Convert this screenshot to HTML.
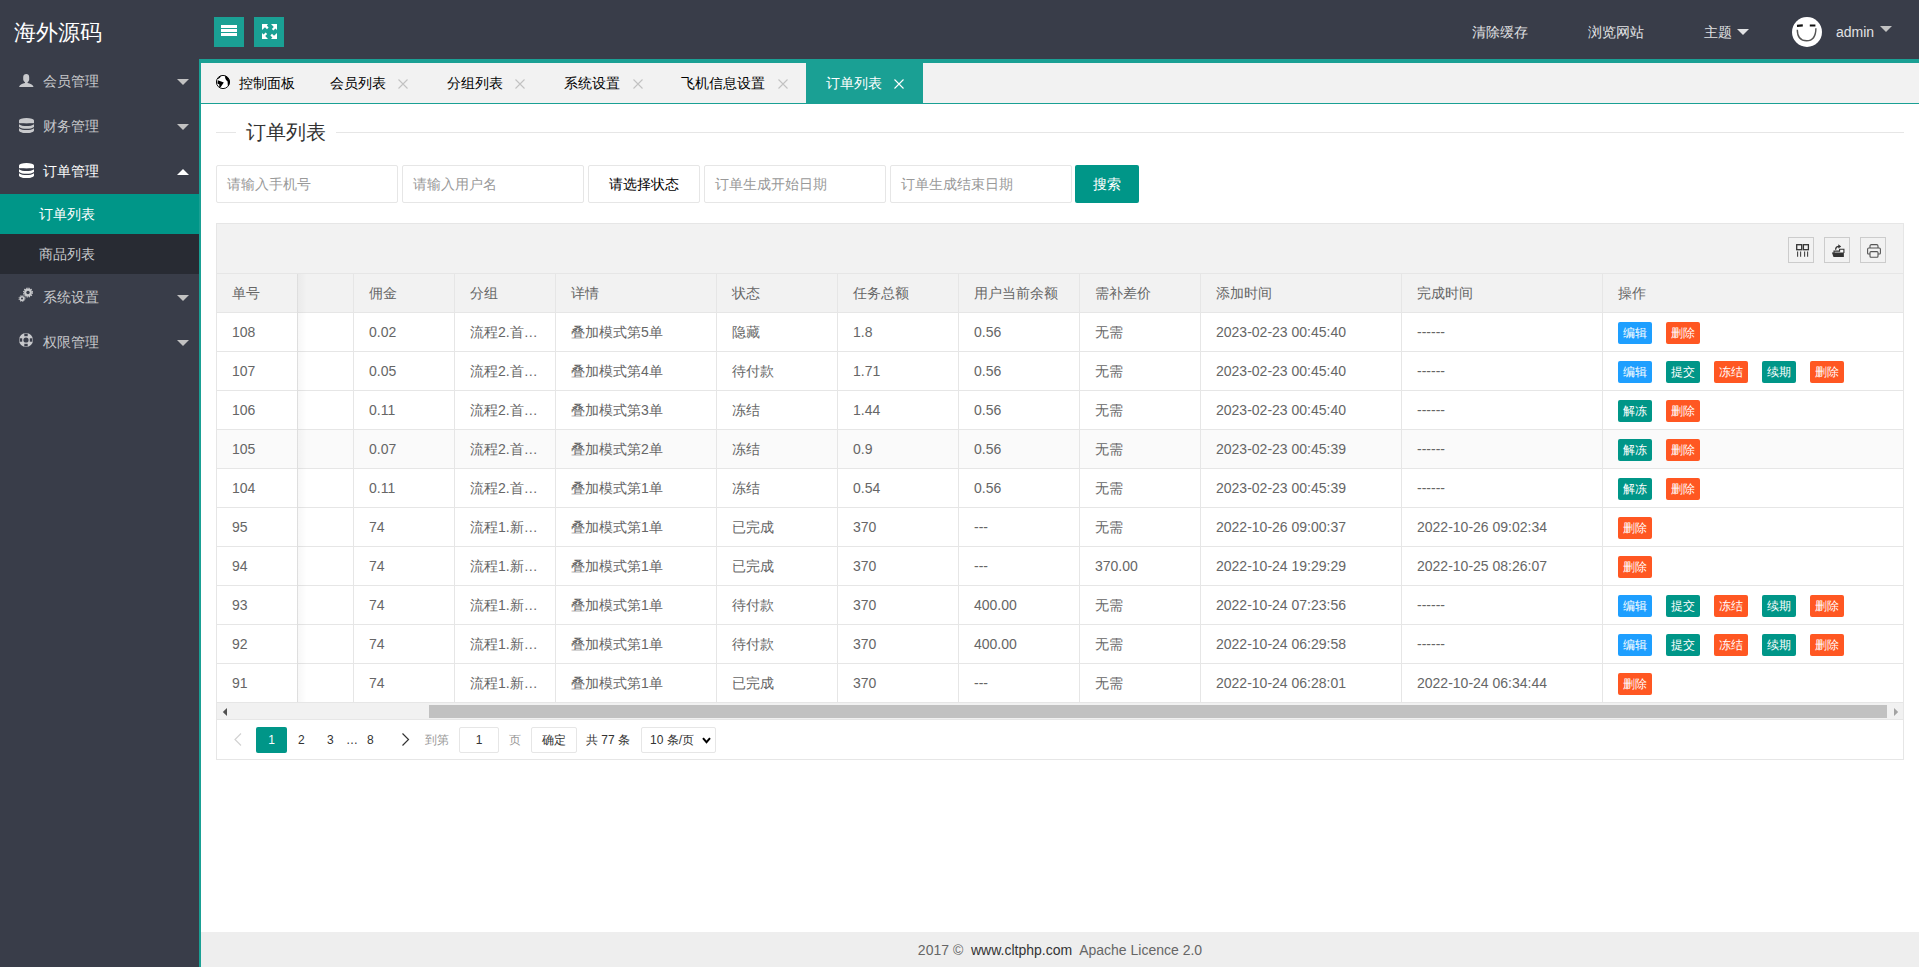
<!DOCTYPE html>
<html><head><meta charset="utf-8">
<style>
*{margin:0;padding:0;box-sizing:border-box}
html,body{width:1919px;height:967px;overflow:hidden;background:#fff;font-family:"Liberation Sans",sans-serif;font-size:14px;color:#666}
.abs{position:absolute}
#hdr{position:absolute;left:0;top:0;width:1919px;height:59px;background:#393D49}
#side{position:absolute;left:0;top:59px;width:199px;height:908px;background:#393D49}
#logo{position:absolute;left:14px;top:18px;font-size:22px;line-height:30px;color:#fff;font-weight:500}
.tbtn{position:absolute;top:17px;width:30px;height:30px;background:#1AA094}
.hnav{position:absolute;top:22px;line-height:20px;font-size:14px;color:#e1e2e4}
.tri{position:absolute;width:0;height:0;border-left:6px solid transparent;border-right:6px solid transparent;border-top:6px solid #c2c2c2}
.mi{position:absolute;left:0;width:199px;height:45px;color:#c8c9cc}
.mi .t{position:absolute;left:43px;top:13px;line-height:20px}
.mi svg{position:absolute}
.mi .tri{left:177px;top:21px;border-top-color:#c2c2c2}
.sub{position:absolute;left:0;width:199px;height:40px;line-height:40px}
.sub span{position:absolute;left:39px;top:0}
#lborder{position:absolute;left:199px;top:59px;width:2px;height:908px;background:#1AA094}
#tabs{position:absolute;left:201px;top:59px;width:1718px;height:45px;background:#f2f2f2;border-top:4px solid #1AA094;border-bottom:1px solid #1AA094}
.tab{position:absolute;top:0;height:40px;line-height:40px;color:#000;font-size:14px}
.tab .x{position:absolute;top:0;color:#c2c2c2;font-size:14px}
#legend{position:absolute;left:216px;top:132px;width:1688px;height:1px;background:#e6e6e6}
#legtext{position:absolute;left:236px;top:119px;padding:0 10px;background:#fff;font-size:20px;line-height:26px;color:#333}
.inp{position:absolute;top:165px;height:38px;border:1px solid #e6e6e6;border-radius:2px;background:#fff;line-height:36px;padding-left:10px;color:#999;font-size:14px}
#tbl{position:absolute;left:216px;top:223px;width:1688px;height:537px;background:#fff}
#tbl .outl{position:absolute;left:0;top:0;width:1688px;height:537px;border:1px solid #e6e6e6;pointer-events:none}
.toolbar{position:absolute;left:0;top:0;width:1688px;height:51px;background:#f2f2f2;border-bottom:1px solid #e6e6e6}
.ticon{position:absolute;top:14px;width:26px;height:26px;border:1px solid #ccc;background:#f2f2f2}
.thead{position:absolute;left:0;width:1688px;height:39px;background:#f2f2f2}
.rowbg{position:absolute;left:0;width:1688px;height:39px;background:#fff}
.rowbg.hov{background:#fafafa}
.c{position:absolute;border-left:1px solid #e6e6e6;border-bottom:1px solid #e6e6e6;line-height:38px;padding-left:15px;white-space:nowrap;color:#666}
.btn{position:absolute;display:inline-block;font-style:normal;height:22px;line-height:22px;padding:0 5px;font-size:12px;color:#fff;border-radius:2px}
.ops{position:absolute;left:15px;top:9px;height:22px;width:280px}
.ops .btn{top:0}
.btn.b{background:#1E9FFF}.btn.o{background:#FF5722}.btn.g{background:#009688}
#pager{position:absolute;left:0;top:497px;width:1688px;height:40px;font-size:12px}
.pg{position:absolute;top:7px;line-height:26px;color:#333}
#footer{position:absolute;left:201px;top:932px;width:1718px;height:35px;background:#eee;text-align:center;line-height:37px;color:#666;font-size:14px}
</style></head><body>
<div id="hdr"></div>
<div id="side"></div>
<div id="logo">海外源码</div>
<div class="tbtn" style="left:214px"><svg class="abs" style="left:7px;top:8px" width="16" height="12"><rect x="0" y="0" width="16" height="3" fill="#fff"/><rect x="0" y="4" width="16" height="3" fill="#fff"/><rect x="0" y="8" width="16" height="3" fill="#fff"/></svg></div>
<div class="tbtn" style="left:254px"><svg class="abs" style="left:8px;top:7px" width="15" height="15" viewBox="0 0 15 15"><path fill="#fff" d="M0 0H6L4.8 1.6 6.6 3.6 5 5.2 3 3.2 0 6Z M15 0V6L13.4 4.6 11.4 6.6 9.8 5 11.8 3 9 0Z M0 15V9L1.6 10.4 3.6 8.4 5.2 10 3.2 12 6 15Z M15 15H9L10.4 13.4 8.4 11.4 10 9.8 12 11.8 15 9Z"/></svg></div>
<div class="hnav" style="left:1472px">清除缓存</div>
<div class="hnav" style="left:1588px">浏览网站</div>
<div class="hnav" style="left:1704px">主题</div>
<div class="tri" style="left:1737px;top:29px;border-top-color:#e1e2e4"></div>
<svg class="abs" style="left:1792px;top:17px" width="30" height="30" viewBox="0 0 30 30"><circle cx="15" cy="15" r="15" fill="#fff"/><path d="M5 8.8L10.8 8.4 M17.8 8.5H23.4" stroke="#111" stroke-width="2.2"/><path d="M5.3 12.8C5.3 20 9 23.8 14.6 23.8C20.4 23.8 23.9 19.5 23.9 11.3" stroke="#555" stroke-width="1.4" fill="none"/></svg>
<div class="hnav" style="left:1836px;top:22px">admin</div>
<div class="tri" style="left:1880px;top:26px;border-top-color:#c2c2c2"></div>

<div class="mi" style="top:58px"><svg style="left:19px;top:16px" width="15" height="14" viewBox="0 0 15 14"><path fill="#c8c9cc" d="M4.2 3.2C4.2 1.2 5.5 0 7.3 0S10.2 1.2 10.2 3.2V5.4C10.2 6.6 9.4 7.6 8.6 8.2V9C11.2 9.4 13.6 10.4 14.6 13H0C1 10.4 3.4 9.4 6 9V8.2C5.2 7.6 4.2 6.6 4.2 5.4Z"/></svg><span class="t">会员管理</span><i class="tri"></i></div>
<div class="mi" style="top:103px"><svg style="left:19px;top:15px" width="15" height="15" viewBox="0 0 15 15"><g fill="#c8c9cc"><ellipse cx="7.5" cy="2.6" rx="7.5" ry="2.6"/><rect x="0" y="2.6" width="15" height="2.6"/><path d="M0 6.2C1.5 7.6 4.5 8 7.5 8S13.5 7.6 15 6.2V9C13.5 10.4 10.5 10.8 7.5 10.8S1.5 10.4 0 9Z"/><path d="M0 10.2C1.5 11.6 4.5 12 7.5 12S13.5 11.6 15 10.2V12.4C15 13.8 11.6 15 7.5 15S0 13.8 0 12.4Z"/></g></svg><span class="t">财务管理</span><i class="tri"></i></div>
<div class="mi" style="top:148px;color:#fff"><svg style="left:19px;top:15px" width="15" height="15" viewBox="0 0 15 15"><g fill="#fff"><ellipse cx="7.5" cy="2.6" rx="7.5" ry="2.6"/><rect x="0" y="2.6" width="15" height="2.6"/><path d="M0 6.2C1.5 7.6 4.5 8 7.5 8S13.5 7.6 15 6.2V9C13.5 10.4 10.5 10.8 7.5 10.8S1.5 10.4 0 9Z"/><path d="M0 10.2C1.5 11.6 4.5 12 7.5 12S13.5 11.6 15 10.2V12.4C15 13.8 11.6 15 7.5 15S0 13.8 0 12.4Z"/></g></svg><span class="t">订单管理</span><i class="tri" style="border-top:0;border-bottom:6px solid #fff"></i></div>
<div class="sub" style="top:194px;background:#009688;color:#fff"><span>订单列表</span></div>
<div class="sub" style="top:234px;background:#282B33;color:#c8c9cc"><span>商品列表</span></div>
<div class="mi" style="top:274px"><svg style="left:17px;top:12px" width="17" height="17" viewBox="0 0 17 17"><g fill="#c8c9cc"><circle cx="11" cy="6.5" r="3.9"/><circle cx="5" cy="12.5" r="2.6"/></g><g fill="none" stroke="#c8c9cc"><circle cx="11" cy="6.5" r="4.4" stroke-width="1.2" stroke-dasharray="1.3 1"/><circle cx="5" cy="12.5" r="3" stroke-width="1" stroke-dasharray="1 0.9"/></g><g fill="#393D49"><circle cx="11" cy="6.5" r="1.7"/><circle cx="5" cy="12.5" r="1"/></g></svg><span class="t">系统设置</span><i class="tri"></i></div>
<div class="mi" style="top:319px"><svg style="left:19px;top:14px" width="14" height="14" viewBox="0 0 14 14"><circle cx="7" cy="7" r="7" fill="#c8c9cc"/><circle cx="7" cy="7" r="2.6" fill="#393D49"/><g fill="#393D49"><rect x="5.3" y="0.6" width="3.4" height="2.6"/><rect x="5.3" y="10.8" width="3.4" height="2.6"/><rect x="0.6" y="5.3" width="2.6" height="3.4"/><rect x="10.8" y="5.3" width="2.6" height="3.4"/></g></svg><span class="t">权限管理</span><i class="tri"></i></div>

<div id="lborder"></div>
<div id="tabs">
  <svg class="abs" style="left:15px;top:12px" width="15" height="15" viewBox="0 0 15 15"><circle cx="7" cy="7" r="6.6" fill="#fff" stroke="#000" stroke-width="0.95"/><path fill="#000" d="M1.4 4.2C3 3.8 4.4 2.8 5.2 0.8A6.6 6.6 0 0 0 1.4 4.2Z M1.8 5.2L7.8 7.4L4.4 12.6L3.2 12L3.4 9.4L1.4 8.6Z M9 0.8C9 3.4 9.6 5 11.6 6.4L11.8 10.6L12.2 11A6.6 6.6 0 0 0 9 0.8Z"/></svg><div class="tab" style="left:38px">控制面板</div>
  <div class="tab" style="left:129px">会员列表</div>
  <div class="tab" style="left:246px">分组列表</div>
  <div class="tab" style="left:363px">系统设置</div>
  <div class="tab" style="left:480px">飞机信息设置</div>
  <div class="tab" style="left:605px;width:117px;background:#1AA094;color:#fff;padding-left:20px">订单列表</div>
<svg class="abs" style="left:197px;top:16px" width="10" height="10" viewBox="0 0 10 10"><path d="M0.5 0.5L9.5 9.5M9.5 0.5L0.5 9.5" stroke="#c2c2c2" stroke-width="1.1"/></svg><svg class="abs" style="left:314px;top:16px" width="10" height="10" viewBox="0 0 10 10"><path d="M0.5 0.5L9.5 9.5M9.5 0.5L0.5 9.5" stroke="#c2c2c2" stroke-width="1.1"/></svg><svg class="abs" style="left:432px;top:16px" width="10" height="10" viewBox="0 0 10 10"><path d="M0.5 0.5L9.5 9.5M9.5 0.5L0.5 9.5" stroke="#c2c2c2" stroke-width="1.1"/></svg><svg class="abs" style="left:577px;top:16px" width="10" height="10" viewBox="0 0 10 10"><path d="M0.5 0.5L9.5 9.5M9.5 0.5L0.5 9.5" stroke="#c2c2c2" stroke-width="1.1"/></svg><svg class="abs" style="left:693px;top:16px" width="10" height="10" viewBox="0 0 10 10"><path d="M0.5 0.5L9.5 9.5M9.5 0.5L0.5 9.5" stroke="#fff" stroke-width="1.1"/></svg>
</div>

<div id="legend"></div>
<div id="legtext">订单列表</div>

<div class="inp" style="left:216px;width:182px">请输入手机号</div>
<div class="inp" style="left:402px;width:182px">请输入用户名</div>
<div class="inp" style="left:588px;width:112px;color:#000;padding-left:0;text-align:center">请选择状态</div>
<div class="inp" style="left:704px;width:182px">订单生成开始日期</div>
<div class="inp" style="left:890px;width:182px">订单生成结束日期</div>
<div class="abs" style="left:1075px;top:165px;width:64px;height:38px;background:#009688;color:#fff;text-align:center;line-height:38px;border-radius:2px">搜索</div>

<div id="tbl">
<div class="toolbar"></div>
<div class="ticon" style="left:1572px;top:14px"><svg class="abs" style="left:7px;top:6px" width="14" height="14" viewBox="0 0 14 14"><g fill="none" stroke="#333" stroke-width="1.3"><rect x="0.7" y="0.7" width="5" height="5"/><rect x="7.4" y="0.7" width="5" height="5"/><path d="M1.6 7.4V12.8 M4.6 7.4V12.8 M8.6 7.4V12.8 M11.6 7.4V12.8" stroke-width="1.1" stroke="#444"/></g></svg></div>
<div class="ticon" style="left:1608px;top:14px"><svg class="abs" style="left:6px;top:6px" width="14" height="14" viewBox="0 0 14 14"><path d="M3 8.9V7.1H8.6V5.2H12.9V8.9" stroke="#333" stroke-width="1.1" fill="#fafafa"/><path fill="#333" d="M0.9 8.6H12.9V12.9H2.5Z"/><path d="M4.6 5.8C4.6 3.5 5.8 2.3 8 2.3" stroke="#333" stroke-width="1.3" fill="none"/><path fill="#333" d="M7.3 0.2L10.2 2.4 7.3 4.4Z"/></svg></div>
<div class="ticon" style="left:1644px;top:14px"><svg class="abs" style="left:6px;top:6px" width="14" height="14" viewBox="0 0 14 14"><g fill="none" stroke="#555" stroke-width="1.1"><path d="M3 4V2C3 1 3.6 0.6 4.4 0.6H9.6C10.4 0.6 11 1 11 2V4"/><path d="M3 10H1.4C0.8 10 0.6 9.6 0.6 9V5.2C0.6 4.6 1 4 1.8 4H12.2C13 4 13.4 4.6 13.4 5.2V9C13.4 9.6 13.2 10 12.6 10H11"/><rect x="3" y="7.6" width="8" height="5.6" rx="1"/></g></svg></div>
<div class="thead" style="top:51px"></div>
<div class="c h" style="left:0px;top:51px;width:81px;height:39px"><span>单号</span></div>
<div class="c h" style="left:81px;top:51px;width:56px;height:39px"><span></span></div>
<div class="c h" style="left:137px;top:51px;width:101px;height:39px"><span>佣金</span></div>
<div class="c h" style="left:238px;top:51px;width:101px;height:39px"><span>分组</span></div>
<div class="c h" style="left:339px;top:51px;width:161px;height:39px"><span>详情</span></div>
<div class="c h" style="left:500px;top:51px;width:121px;height:39px"><span>状态</span></div>
<div class="c h" style="left:621px;top:51px;width:121px;height:39px"><span>任务总额</span></div>
<div class="c h" style="left:742px;top:51px;width:121px;height:39px"><span>用户当前余额</span></div>
<div class="c h" style="left:863px;top:51px;width:121px;height:39px"><span>需补差价</span></div>
<div class="c h" style="left:984px;top:51px;width:201px;height:39px"><span>添加时间</span></div>
<div class="c h" style="left:1185px;top:51px;width:201px;height:39px"><span>完成时间</span></div>
<div class="c h" style="left:1386px;top:51px;width:301px;height:39px"><span>操作</span></div>
<div class="rowbg" style="top:90px"></div>
<div class="c" style="left:0px;top:90px;width:81px;height:39px"><span>108</span></div>
<div class="c" style="left:81px;top:90px;width:56px;height:39px"><span></span></div>
<div class="c" style="left:137px;top:90px;width:101px;height:39px"><span>0.02</span></div>
<div class="c" style="left:238px;top:90px;width:101px;height:39px"><span>流程2.首…</span></div>
<div class="c" style="left:339px;top:90px;width:161px;height:39px"><span>叠加模式第5单</span></div>
<div class="c" style="left:500px;top:90px;width:121px;height:39px"><span>隐藏</span></div>
<div class="c" style="left:621px;top:90px;width:121px;height:39px"><span>1.8</span></div>
<div class="c" style="left:742px;top:90px;width:121px;height:39px"><span>0.56</span></div>
<div class="c" style="left:863px;top:90px;width:121px;height:39px"><span>无需</span></div>
<div class="c" style="left:984px;top:90px;width:201px;height:39px"><span>2023-02-23 00:45:40</span></div>
<div class="c" style="left:1185px;top:90px;width:201px;height:39px"><span>------</span></div>
<div class="c" style="left:1386px;top:90px;width:301px;height:39px"><span class="ops"><i class="btn b" style="left:0px">编辑</i><i class="btn o" style="left:48px">删除</i></span></div>
<div class="rowbg" style="top:129px"></div>
<div class="c" style="left:0px;top:129px;width:81px;height:39px"><span>107</span></div>
<div class="c" style="left:81px;top:129px;width:56px;height:39px"><span></span></div>
<div class="c" style="left:137px;top:129px;width:101px;height:39px"><span>0.05</span></div>
<div class="c" style="left:238px;top:129px;width:101px;height:39px"><span>流程2.首…</span></div>
<div class="c" style="left:339px;top:129px;width:161px;height:39px"><span>叠加模式第4单</span></div>
<div class="c" style="left:500px;top:129px;width:121px;height:39px"><span>待付款</span></div>
<div class="c" style="left:621px;top:129px;width:121px;height:39px"><span>1.71</span></div>
<div class="c" style="left:742px;top:129px;width:121px;height:39px"><span>0.56</span></div>
<div class="c" style="left:863px;top:129px;width:121px;height:39px"><span>无需</span></div>
<div class="c" style="left:984px;top:129px;width:201px;height:39px"><span>2023-02-23 00:45:40</span></div>
<div class="c" style="left:1185px;top:129px;width:201px;height:39px"><span>------</span></div>
<div class="c" style="left:1386px;top:129px;width:301px;height:39px"><span class="ops"><i class="btn b" style="left:0px">编辑</i><i class="btn g" style="left:48px">提交</i><i class="btn o" style="left:96px">冻结</i><i class="btn g" style="left:144px">续期</i><i class="btn o" style="left:192px">删除</i></span></div>
<div class="rowbg" style="top:168px"></div>
<div class="c" style="left:0px;top:168px;width:81px;height:39px"><span>106</span></div>
<div class="c" style="left:81px;top:168px;width:56px;height:39px"><span></span></div>
<div class="c" style="left:137px;top:168px;width:101px;height:39px"><span>0.11</span></div>
<div class="c" style="left:238px;top:168px;width:101px;height:39px"><span>流程2.首…</span></div>
<div class="c" style="left:339px;top:168px;width:161px;height:39px"><span>叠加模式第3单</span></div>
<div class="c" style="left:500px;top:168px;width:121px;height:39px"><span>冻结</span></div>
<div class="c" style="left:621px;top:168px;width:121px;height:39px"><span>1.44</span></div>
<div class="c" style="left:742px;top:168px;width:121px;height:39px"><span>0.56</span></div>
<div class="c" style="left:863px;top:168px;width:121px;height:39px"><span>无需</span></div>
<div class="c" style="left:984px;top:168px;width:201px;height:39px"><span>2023-02-23 00:45:40</span></div>
<div class="c" style="left:1185px;top:168px;width:201px;height:39px"><span>------</span></div>
<div class="c" style="left:1386px;top:168px;width:301px;height:39px"><span class="ops"><i class="btn g" style="left:0px">解冻</i><i class="btn o" style="left:48px">删除</i></span></div>
<div class="rowbg hov" style="top:207px"></div>
<div class="c" style="left:0px;top:207px;width:81px;height:39px"><span>105</span></div>
<div class="c" style="left:81px;top:207px;width:56px;height:39px"><span></span></div>
<div class="c" style="left:137px;top:207px;width:101px;height:39px"><span>0.07</span></div>
<div class="c" style="left:238px;top:207px;width:101px;height:39px"><span>流程2.首…</span></div>
<div class="c" style="left:339px;top:207px;width:161px;height:39px"><span>叠加模式第2单</span></div>
<div class="c" style="left:500px;top:207px;width:121px;height:39px"><span>冻结</span></div>
<div class="c" style="left:621px;top:207px;width:121px;height:39px"><span>0.9</span></div>
<div class="c" style="left:742px;top:207px;width:121px;height:39px"><span>0.56</span></div>
<div class="c" style="left:863px;top:207px;width:121px;height:39px"><span>无需</span></div>
<div class="c" style="left:984px;top:207px;width:201px;height:39px"><span>2023-02-23 00:45:39</span></div>
<div class="c" style="left:1185px;top:207px;width:201px;height:39px"><span>------</span></div>
<div class="c" style="left:1386px;top:207px;width:301px;height:39px"><span class="ops"><i class="btn g" style="left:0px">解冻</i><i class="btn o" style="left:48px">删除</i></span></div>
<div class="rowbg" style="top:246px"></div>
<div class="c" style="left:0px;top:246px;width:81px;height:39px"><span>104</span></div>
<div class="c" style="left:81px;top:246px;width:56px;height:39px"><span></span></div>
<div class="c" style="left:137px;top:246px;width:101px;height:39px"><span>0.11</span></div>
<div class="c" style="left:238px;top:246px;width:101px;height:39px"><span>流程2.首…</span></div>
<div class="c" style="left:339px;top:246px;width:161px;height:39px"><span>叠加模式第1单</span></div>
<div class="c" style="left:500px;top:246px;width:121px;height:39px"><span>冻结</span></div>
<div class="c" style="left:621px;top:246px;width:121px;height:39px"><span>0.54</span></div>
<div class="c" style="left:742px;top:246px;width:121px;height:39px"><span>0.56</span></div>
<div class="c" style="left:863px;top:246px;width:121px;height:39px"><span>无需</span></div>
<div class="c" style="left:984px;top:246px;width:201px;height:39px"><span>2023-02-23 00:45:39</span></div>
<div class="c" style="left:1185px;top:246px;width:201px;height:39px"><span>------</span></div>
<div class="c" style="left:1386px;top:246px;width:301px;height:39px"><span class="ops"><i class="btn g" style="left:0px">解冻</i><i class="btn o" style="left:48px">删除</i></span></div>
<div class="rowbg" style="top:285px"></div>
<div class="c" style="left:0px;top:285px;width:81px;height:39px"><span>95</span></div>
<div class="c" style="left:81px;top:285px;width:56px;height:39px"><span></span></div>
<div class="c" style="left:137px;top:285px;width:101px;height:39px"><span>74</span></div>
<div class="c" style="left:238px;top:285px;width:101px;height:39px"><span>流程1.新…</span></div>
<div class="c" style="left:339px;top:285px;width:161px;height:39px"><span>叠加模式第1单</span></div>
<div class="c" style="left:500px;top:285px;width:121px;height:39px"><span>已完成</span></div>
<div class="c" style="left:621px;top:285px;width:121px;height:39px"><span>370</span></div>
<div class="c" style="left:742px;top:285px;width:121px;height:39px"><span>---</span></div>
<div class="c" style="left:863px;top:285px;width:121px;height:39px"><span>无需</span></div>
<div class="c" style="left:984px;top:285px;width:201px;height:39px"><span>2022-10-26 09:00:37</span></div>
<div class="c" style="left:1185px;top:285px;width:201px;height:39px"><span>2022-10-26 09:02:34</span></div>
<div class="c" style="left:1386px;top:285px;width:301px;height:39px"><span class="ops"><i class="btn o" style="left:0px">删除</i></span></div>
<div class="rowbg" style="top:324px"></div>
<div class="c" style="left:0px;top:324px;width:81px;height:39px"><span>94</span></div>
<div class="c" style="left:81px;top:324px;width:56px;height:39px"><span></span></div>
<div class="c" style="left:137px;top:324px;width:101px;height:39px"><span>74</span></div>
<div class="c" style="left:238px;top:324px;width:101px;height:39px"><span>流程1.新…</span></div>
<div class="c" style="left:339px;top:324px;width:161px;height:39px"><span>叠加模式第1单</span></div>
<div class="c" style="left:500px;top:324px;width:121px;height:39px"><span>已完成</span></div>
<div class="c" style="left:621px;top:324px;width:121px;height:39px"><span>370</span></div>
<div class="c" style="left:742px;top:324px;width:121px;height:39px"><span>---</span></div>
<div class="c" style="left:863px;top:324px;width:121px;height:39px"><span>370.00</span></div>
<div class="c" style="left:984px;top:324px;width:201px;height:39px"><span>2022-10-24 19:29:29</span></div>
<div class="c" style="left:1185px;top:324px;width:201px;height:39px"><span>2022-10-25 08:26:07</span></div>
<div class="c" style="left:1386px;top:324px;width:301px;height:39px"><span class="ops"><i class="btn o" style="left:0px">删除</i></span></div>
<div class="rowbg" style="top:363px"></div>
<div class="c" style="left:0px;top:363px;width:81px;height:39px"><span>93</span></div>
<div class="c" style="left:81px;top:363px;width:56px;height:39px"><span></span></div>
<div class="c" style="left:137px;top:363px;width:101px;height:39px"><span>74</span></div>
<div class="c" style="left:238px;top:363px;width:101px;height:39px"><span>流程1.新…</span></div>
<div class="c" style="left:339px;top:363px;width:161px;height:39px"><span>叠加模式第1单</span></div>
<div class="c" style="left:500px;top:363px;width:121px;height:39px"><span>待付款</span></div>
<div class="c" style="left:621px;top:363px;width:121px;height:39px"><span>370</span></div>
<div class="c" style="left:742px;top:363px;width:121px;height:39px"><span>400.00</span></div>
<div class="c" style="left:863px;top:363px;width:121px;height:39px"><span>无需</span></div>
<div class="c" style="left:984px;top:363px;width:201px;height:39px"><span>2022-10-24 07:23:56</span></div>
<div class="c" style="left:1185px;top:363px;width:201px;height:39px"><span>------</span></div>
<div class="c" style="left:1386px;top:363px;width:301px;height:39px"><span class="ops"><i class="btn b" style="left:0px">编辑</i><i class="btn g" style="left:48px">提交</i><i class="btn o" style="left:96px">冻结</i><i class="btn g" style="left:144px">续期</i><i class="btn o" style="left:192px">删除</i></span></div>
<div class="rowbg" style="top:402px"></div>
<div class="c" style="left:0px;top:402px;width:81px;height:39px"><span>92</span></div>
<div class="c" style="left:81px;top:402px;width:56px;height:39px"><span></span></div>
<div class="c" style="left:137px;top:402px;width:101px;height:39px"><span>74</span></div>
<div class="c" style="left:238px;top:402px;width:101px;height:39px"><span>流程1.新…</span></div>
<div class="c" style="left:339px;top:402px;width:161px;height:39px"><span>叠加模式第1单</span></div>
<div class="c" style="left:500px;top:402px;width:121px;height:39px"><span>待付款</span></div>
<div class="c" style="left:621px;top:402px;width:121px;height:39px"><span>370</span></div>
<div class="c" style="left:742px;top:402px;width:121px;height:39px"><span>400.00</span></div>
<div class="c" style="left:863px;top:402px;width:121px;height:39px"><span>无需</span></div>
<div class="c" style="left:984px;top:402px;width:201px;height:39px"><span>2022-10-24 06:29:58</span></div>
<div class="c" style="left:1185px;top:402px;width:201px;height:39px"><span>------</span></div>
<div class="c" style="left:1386px;top:402px;width:301px;height:39px"><span class="ops"><i class="btn b" style="left:0px">编辑</i><i class="btn g" style="left:48px">提交</i><i class="btn o" style="left:96px">冻结</i><i class="btn g" style="left:144px">续期</i><i class="btn o" style="left:192px">删除</i></span></div>
<div class="rowbg" style="top:441px"></div>
<div class="c" style="left:0px;top:441px;width:81px;height:39px"><span>91</span></div>
<div class="c" style="left:81px;top:441px;width:56px;height:39px"><span></span></div>
<div class="c" style="left:137px;top:441px;width:101px;height:39px"><span>74</span></div>
<div class="c" style="left:238px;top:441px;width:101px;height:39px"><span>流程1.新…</span></div>
<div class="c" style="left:339px;top:441px;width:161px;height:39px"><span>叠加模式第1单</span></div>
<div class="c" style="left:500px;top:441px;width:121px;height:39px"><span>已完成</span></div>
<div class="c" style="left:621px;top:441px;width:121px;height:39px"><span>370</span></div>
<div class="c" style="left:742px;top:441px;width:121px;height:39px"><span>---</span></div>
<div class="c" style="left:863px;top:441px;width:121px;height:39px"><span>无需</span></div>
<div class="c" style="left:984px;top:441px;width:201px;height:39px"><span>2022-10-24 06:28:01</span></div>
<div class="c" style="left:1185px;top:441px;width:201px;height:39px"><span>2022-10-24 06:34:44</span></div>
<div class="c" style="left:1386px;top:441px;width:301px;height:39px"><span class="ops"><i class="btn o" style="left:0px">删除</i></span></div>
<div class="abs" style="left:81px;top:51px;width:10px;height:428px;background:linear-gradient(to right,rgba(0,0,0,0.035),rgba(0,0,0,0))"></div>
<div class="abs" style="left:0;top:480px;width:1688px;height:17px;background:#f1f1f1;border-bottom:1px solid #e6e6e6"></div>
<svg class="abs" style="left:6px;top:485px" width="6" height="8"><path d="M5 0V8L0.8 4Z" fill="#505050"/></svg>
<div class="abs" style="left:213px;top:482px;width:1458px;height:13px;background:#c1c1c1"></div>
<svg class="abs" style="left:1677px;top:485px" width="6" height="8"><path d="M1 0V8L5.2 4Z" fill="#a3a3a3"/></svg>
<div id="pager">
<svg class="abs" style="left:17px;top:13px" width="10" height="13"><path d="M8 0.5L2 6.5 8 12.5" stroke="#d2d2d2" stroke-width="1.2" fill="none"/></svg>
<div class="abs" style="left:40px;top:7px;width:31px;height:26px;background:#009688;border-radius:2px;color:#fff;text-align:center;line-height:26px">1</div>
<div class="pg" style="left:82px">2</div>
<div class="pg" style="left:111px">3</div>
<div class="pg" style="left:130px">…</div>
<div class="pg" style="left:151px">8</div>
<svg class="abs" style="left:185px;top:13px" width="10" height="13"><path d="M1.5 0.5L7.5 6.5 1.5 12.5" stroke="#333" stroke-width="1.2" fill="none"/></svg>
<div class="pg" style="left:209px;color:#999">到第</div>
<div class="abs" style="left:243px;top:7px;width:40px;height:26px;border:1px solid #e6e6e6;border-radius:2px;text-align:center;line-height:24px;color:#333">1</div>
<div class="pg" style="left:293px;color:#999">页</div>
<div class="abs" style="left:315px;top:7px;width:46px;height:26px;border:1px solid #e6e6e6;border-radius:2px;text-align:center;line-height:24px;color:#333">确定</div>
<div class="pg" style="left:370px;color:#333">共 77 条</div>
<div class="abs" style="left:425px;top:7px;width:75px;height:26px;border:1px solid #e6e6e6;border-radius:2px;line-height:24px;color:#333;padding-left:8px">10 条/页</div>
<svg class="abs" style="left:486px;top:17px" width="9" height="8"><path d="M1 1.2L4.5 5.2 8 1.2" stroke="#000" stroke-width="2" fill="none"/></svg>
</div>
<div class="outl"></div>
</div>

<div id="footer">2017 ©&nbsp; <span style="color:#333">www.cltphp.com</span>&nbsp; Apache Licence 2.0</div>
</body></html>
